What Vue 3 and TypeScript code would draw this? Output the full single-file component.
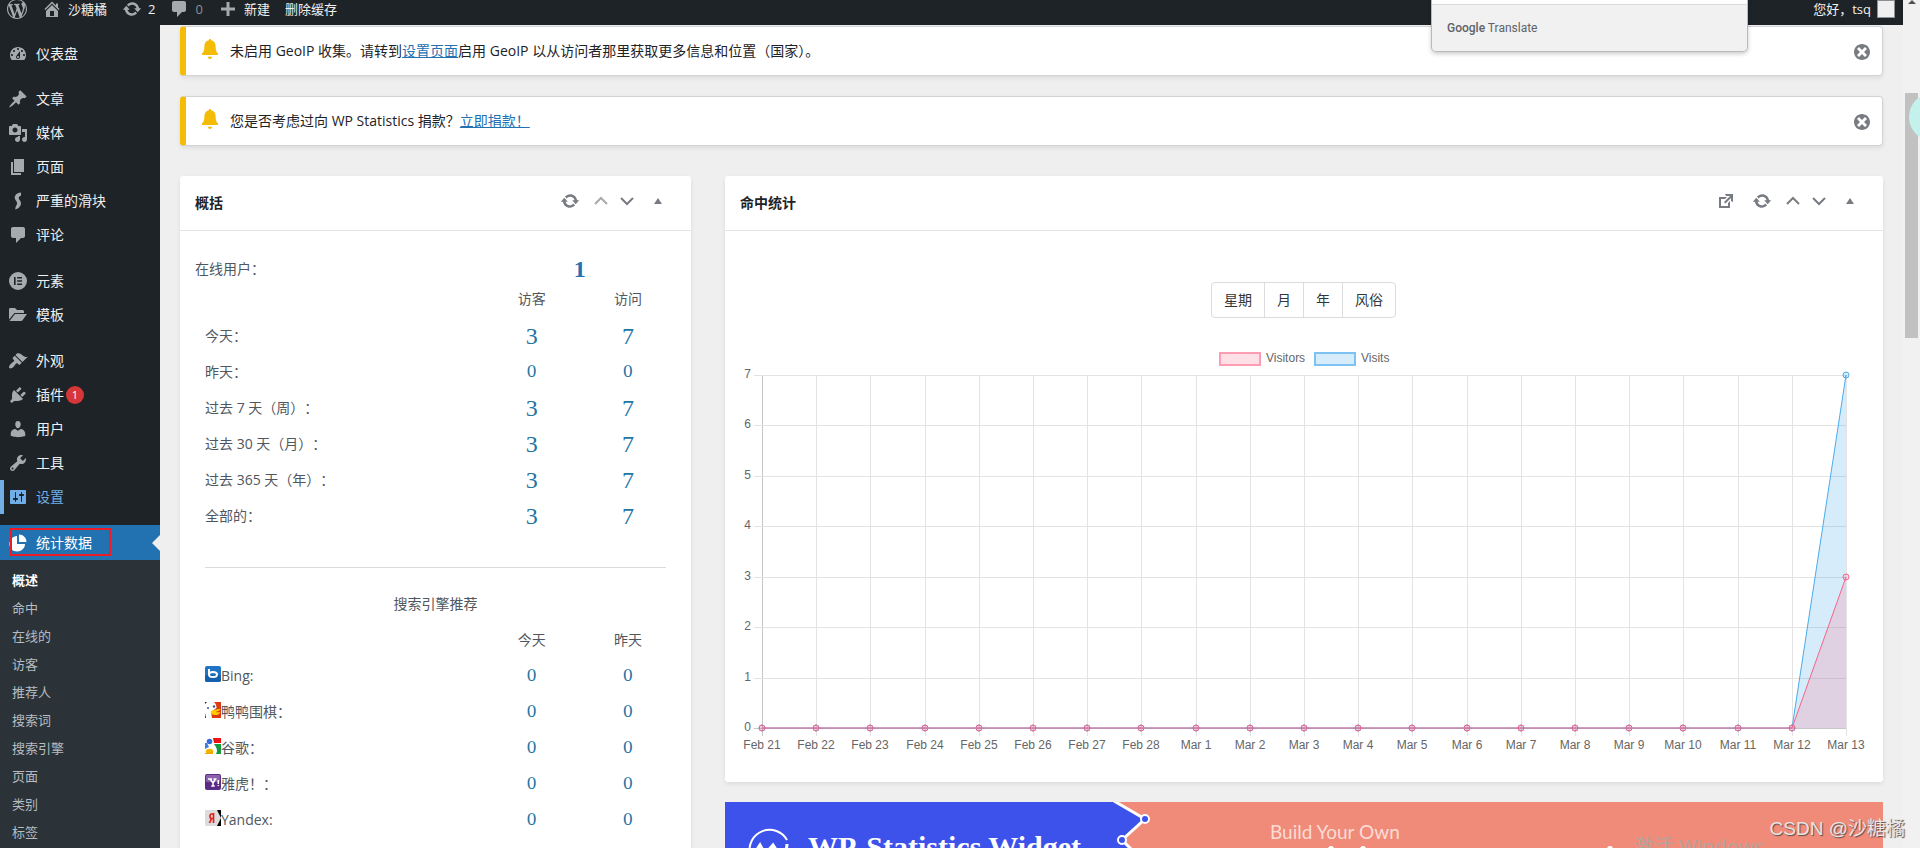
<script setup lang="ts">
interface MenuItem {
  label: string
  icon: string
  badge?: number
  highlight?: boolean
}

const icons: Record<string, string> = {
  wordpress:
    'M20 10c0-5.51-4.49-10-10-10C4.48 0 0 4.49 0 10c0 5.52 4.48 10 10 10 5.51 0 10-4.48 10-10zM7.78 15.37L4.37 6.22c.55-.02 1.17-.08 1.17-.08.5-.06.44-1.13-.06-1.11 0 0-1.45.11-2.37.11-.18 0-.37 0-.58-.01C4.12 2.69 6.87 1.11 10 1.11c2.33 0 4.45.87 6.05 2.34-.68-.11-1.65.39-1.65 1.58 0 .74.45 1.36.9 2.1.35.61.55 1.36.55 2.46 0 1.49-1.4 5-1.4 5l-3.03-8.37c.54-.02.82-.17.82-.17.5-.05.44-1.25-.06-1.22 0 0-1.44.12-2.38.12-.87 0-2.33-.12-2.33-.12-.5-.03-.56 1.2-.06 1.22l.92.08 1.26 3.41zM17.41 10c.24-.64.74-1.87.43-4.25.7 1.29 1.05 2.71 1.05 4.25 0 3.29-1.73 6.24-4.4 7.78.97-2.59 1.94-5.2 2.92-7.78zM6.1 18.09C3.12 16.65 1.11 13.53 1.11 10c0-1.3.23-2.48.72-3.59C3.25 10.3 4.67 14.2 6.1 18.09zm4.03-6.63l2.58 6.98c-.86.29-1.76.45-2.71.45-.79 0-1.57-.11-2.29-.33.81-2.38 1.62-4.74 2.42-7.1z',
  home: 'M16 8.5l1.53 1.53-1.06 1.06L10 4.6l-6.47 6.49-1.06-1.06L10 2.5l4 4v-2h2v4zm-6-2.46l6 5.99V18H4v-5.97zM12 17v-5H8v5h4z',
  update:
    'M10.2 3.28c3.53 0 6.43 2.61 6.92 6h2.08l-3.5 4-3.5-4h2.32c-.45-1.97-2.21-3.45-4.32-3.45-1.45 0-2.73.71-3.54 1.78L4.95 5.66C6.23 4.2 8.11 3.28 10.2 3.28zm-.4 13.44c-3.52 0-6.43-2.61-6.92-6H.8l3.5-4c1.17 1.33 2.33 2.67 3.5 4H5.48c.45 1.97 2.21 3.45 4.32 3.45 1.45 0 2.73-.71 3.54-1.78l1.71 1.95c-1.28 1.46-3.15 2.38-5.25 2.38z',
  comment: 'M5 2h10c1.1 0 2 .9 2 2v7c0 1.1-.9 2-2 2h-2l-5 5v-5H5c-1.1 0-2-.9-2-2V4c0-1.1.9-2 2-2z',
  plus: 'M17 8.5v3h-5.5v5.500h-3v-5.500H3v-3h5.500V3h3v5.500z',
  dashboard:
    'M3.76 16h12.48c1.1-1.37 1.76-3.11 1.76-5 0-4.42-3.58-8-8-8s-8 3.58-8 8c0 1.89.66 3.63 1.76 5zM10 4c.55 0 1 .45 1 1s-.45 1-1 1-1-.45-1-1 .45-1 1-1zM6 6c.55 0 1 .45 1 1s-.45 1-1 1-1-.45-1-1 .45-1 1-1zm8 0c.55 0 1 .45 1 1s-.45 1-1 1-1-.45-1-1 .45-1 1-1zm-5.37 5.55L12 7v6c0 1.1-.9 2-2 2s-2-.9-2-2c0-.57.24-1.08.63-1.45zM4 10c.55 0 1 .45 1 1s-.45 1-1 1-1-.45-1-1 .45-1 1-1zm12 0c.55 0 1 .45 1 1s-.45 1-1 1-1-.45-1-1 .45-1 1-1zm-5 3c0-.55-.45-1-1-1s-1 .45-1 1 .45 1 1 1 1-.45 1-1z',
  post: 'M10.44 3.02l1.82-1.82 6.36 6.35-1.83 1.82c-1.05-.68-2.48-.57-3.41.36l-.75.75c-.92.93-1.04 2.35-.35 3.41l-1.83 1.82-2.41-2.41-2.8 2.79c-.42.42-3.38 2.71-3.8 2.29s1.86-3.39 2.28-3.81l2.79-2.79L4.1 9.36l1.83-1.82c1.05.69 2.48.57 3.4-.36l.75-.75c.93-.92 1.05-2.35.36-3.41z',
  media:
    'M13 11V4c0-.55-.45-1-1-1h-1.67L9 1H5L3.67 3H2c-.55 0-1 .45-1 1v7c0 .55.45 1 1 1h10c.55 0 1-.45 1-1zM7 4.500c1.380 0 2.500 1.120 2.500 2.500S8.380 9.500 7 9.500 4.500 8.380 4.500 7 5.620 4.500 7 4.500zM14 6h5v10.500c0 1.380-1.120 2.500-2.500 2.500S14 17.880 14 16.500s1.120-2.500 2.500-2.500c.17 0 .34.02.5.05V9h-3V6zm-4 8.050V13h2v3.500c0 1.380-1.120 2.500-2.500 2.500S7 17.880 7 16.500 8.120 14 9.500 14c.17 0 .34.02.5.05z',
  page: 'M6 15V2h10v13H6zm-1 1h8v2H3V5h2v11z',
  slider: 'M13 1.500C9 1.800 6.300 4.200 6.800 7.300c.4 2.400 2.600 3.300 2.300 5.300-.2 1.700-1.700 2.600-1.900 5.900 3.900-.9 6.200-3.800 5.700-6.900-.4-2.300-2.400-3-2.200-4.800.1-1.300 1.300-1.700 2.300-2.300z',
  elementor:
    'M10 1a9 9 0 1 0 0 18a9 9 0 0 0 0-18zM6 6h1.600v8H6zM9.200 6H14v1.500H9.200zM9.200 9.250H14v1.500H9.200zM9.200 12.500H14V14H9.200z',
  folder: 'M1 4.500c0-.8.500-1.500 1.300-1.500H7l2 2h5.500c.8 0 1.500.6 1.500 1.500V8H6.500L1 14.500zM7 9h12l-4.500 6.300c-.3.400-.7.700-1.200.700H1.500z',
  appearance:
    'M14.48 11.06L7.41 3.99l1.5-1.5c.5-.56 2.3-.47 3.51.32 1.21.8 1.43 1.28 2.91 2.1 1.18.64 2.45 1.26 4.45.85zm-.71.71L6.7 4.7 4.93 6.47c-.39.39-.39 1.02 0 1.41l1.06 1.06c.39.39.39 1.03 0 1.42-.6.6-1.43 1.11-2.21 1.69-.35.26-.7.53-1.01.84C1.43 14.23.4 16.08 1.4 17.07c.99 1 2.84-.03 4.18-1.36.31-.31.58-.66.85-1.02.57-.78 1.08-1.61 1.69-2.21.39-.39 1.02-.39 1.41 0l1.06 1.06c.39.39 1.02.39 1.41 0z',
  plugins:
    'M13.11 4.36L9.87 7.6 8 5.73l3.24-3.24c.35-.34 1.05-.2 1.56.32.52.51.66 1.21.31 1.55zm-8 1.77l.91-1.12 9.01 9.01-1.19.84c-.71.71-2.63 1.16-3.82 1.16H6.14L4.9 17.26c-.59.59-1.54.59-2.12 0-.59-.58-.59-1.53 0-2.12l1.24-1.24v-3.88c0-1.13.4-3.19 1.09-3.89zm7.26 3.97l3.24-3.24c.34-.35 1.04-.21 1.55.31.52.51.66 1.21.31 1.55l-3.24 3.25z',
  users:
    'M10 9.250c-2.270 0-2.730-3.440-2.730-3.440C7 4.020 7.820 2 9.970 2c2.160 0 2.980 2.020 2.710 3.810 0 0-.41 3.440-2.680 3.440zm0 2.570L12.720 10c2.390 0 4.520 2.330 4.520 4.530v2.490s-3.650 1.130-7.240 1.130c-3.650 0-7.240-1.130-7.240-1.130v-2.490c0-2.250 1.940-4.480 4.470-4.480z',
  tools:
    'M16.68 9.77c-1.34 1.34-3.3 1.67-4.95.99l-5.41 6.52c-.99.99-2.59.99-3.58 0s-.99-2.59 0-3.57l6.52-5.42c-.68-1.65-.35-3.61.99-4.95 1.28-1.28 3.12-1.62 4.72-1.06l-2.89 2.89 2.82 2.82 2.86-2.87c.53 1.58.18 3.39-1.08 4.65zM3.81 16.21c.4.39 1.04.39 1.43 0 .4-.4.4-1.04 0-1.43-.39-.4-1.03-.4-1.43 0-.39.39-.39 1.03 0 1.43z',
  settings:
    'M18 16V4c0-.55-.45-1-1-1H3c-.55 0-1 .45-1 1v12c0 .55.45 1 1 1h14c.55 0 1-.45 1-1zM8 11h1c.55 0 1 .45 1 1s-.45 1-1 1H8v1.500c0 .28-.22.5-.5.5s-.5-.22-.5-.5V13H6c-.55 0-1-.45-1-1s.45-1 1-1h1V5.500c0-.28.22-.5.5-.5s.5.22.5.5V11zm5-2h-1c-.55 0-1-.45-1-1s.45-1 1-1h1V5.500c0-.28.22-.5.5-.5s.5.22.5.5V7h1c.55 0 1 .45 1 1s-.45 1-1 1h-1v5.500c0 .28-.22.5-.5.5s-.5-.22-.5-.5V9z',
  pie: 'M11 9V1.500c4.200 0 7.500 3.300 7.500 7.500H11zM9 3v8h8c0 4.200-3.600 7.500-8 7.500S1.500 15.200 1.500 11 4.800 3 9 3z',
  external: 'M9 3h8v8l-2-1V6.920l-5.600 5.590-1.410-1.410L14.080 5H10zm3 12v-3l2-2v7H3V6h8L9 8H5v7h7z',
  close:
    'M10 2c4.420 0 8 3.580 8 8s-3.580 8-8 8-8-3.580-8-8 3.580-8 8-8zm5 11l-3-3 3-3-2-2-3 3-3-3-2 2 3 3-3 3 2 2 3-3 3 3z',
  bell: 'M10 0c.7 0 1.100.5 1.200 1.200C14 1.800 15.600 4 15.600 7c0 4 .7 6 2.400 7.500V16H2v-1.500C3.700 13 4.400 11 4.400 7c0-3 1.600-5.200 4.400-5.800C8.900.5 9.300 0 10 0zM7.900 17.800h4.200c-.2 1.400-1 2.200-2.100 2.200s-1.900-.8-2.100-2.200z',
}

const menuGroups: MenuItem[][] = [
  [{ label: '仪表盘', icon: 'dashboard' }],
  [
    { label: '文章', icon: 'post' },
    { label: '媒体', icon: 'media' },
    { label: '页面', icon: 'page' },
    { label: '严重的滑块', icon: 'slider' },
    { label: '评论', icon: 'comment' },
  ],
  [
    { label: '元素', icon: 'elementor' },
    { label: '模板', icon: 'folder' },
  ],
  [
    { label: '外观', icon: 'appearance' },
    { label: '插件', icon: 'plugins', badge: 1 },
    { label: '用户', icon: 'users' },
    { label: '工具', icon: 'tools' },
    { label: '设置', icon: 'settings', highlight: true },
  ],
]

const submenu = ['概述', '命中', '在线的', '访客', '推荐人', '搜索词', '搜索引擎', '页面', '类别', '标签']

const periods = [
  { label: '今天：', visitors: 3, visits: 7 },
  { label: '昨天：', visitors: 0, visits: 0 },
  { label: '过去 7 天（周）：', visitors: 3, visits: 7 },
  { label: '过去 30 天（月）：', visitors: 3, visits: 7 },
  { label: '过去 365 天（年）：', visitors: 3, visits: 7 },
  { label: '全部的：', visitors: 3, visits: 7 },
]

const engines = [
  { key: 'bing', label: 'Bing:' },
  { key: 'duck', label: '鸭鸭围棋：' },
  { key: 'google', label: '谷歌：' },
  { key: 'yahoo', label: '雅虎！：' },
  { key: 'yandex', label: 'Yandex:' },
]

const ranges = ['星期', '月', '年', '风俗']

const days: string[] = [
  ...Array.from({ length: 8 }, (_, i) => `Feb ${21 + i}`),
  ...Array.from({ length: 13 }, (_, i) => `Mar ${1 + i}`),
]
const visitors = days.map((_, i) => (i === days.length - 1 ? 3 : 0))
const visits = days.map((_, i) => (i === days.length - 1 ? 7 : 0))

const plot = { left: 37, right: 1121, top: 57, bottom: 410 }
const xAt = (i: number): number => Math.round(plot.left + ((plot.right - plot.left) * i) / (days.length - 1))
const yAt = (v: number): number => Math.round(plot.bottom - ((plot.bottom - plot.top) * v) / 7)
const line = (values: number[]): string => values.map((v, i) => `${xAt(i)},${yAt(v)}`).join(' ')
const area = (values: number[]): string => `${line(values)} ${plot.right},${plot.bottom} ${plot.left},${plot.bottom}`
const ticks = [0, 1, 2, 3, 4, 5, 6, 7]
</script>

<template>
  <div class="window">
    <div class="screen">
      <header class="adminbar">
        <a class="bar-item logo" href="#" aria-label="WordPress"><svg class="ic" viewBox="0 0 20 20"><path :d="icons.wordpress" /></svg></a>
        <a class="bar-item site" href="#"><svg class="ic" viewBox="0 0 20 20"><path fill-rule="evenodd" :d="icons.home" /></svg>沙糖橘</a>
        <a class="bar-item updates" href="#"><svg class="ic" viewBox="0 0 20 20"><path :d="icons.update" /></svg>2</a>
        <a class="bar-item comments" href="#"><svg class="ic" viewBox="0 0 20 20"><path :d="icons.comment" /></svg>0</a>
        <a class="bar-item create" href="#"><svg class="ic" viewBox="0 0 20 20"><path :d="icons.plus" /></svg>新建</a>
        <a class="bar-item" href="#">删除缓存</a>
        <a class="bar-item account" href="#">您好，tsq<span class="avatar"></span></a>
      </header>

      <div class="body">
        <nav class="sidebar">
          <ul v-for="(group, g) in menuGroups" :key="g" class="group">
            <li v-for="item in group" :key="item.label">
              <a class="menu-item" :class="{ highlight: item.highlight }" href="#">
                <svg class="ic" viewBox="0 0 20 20"><path fill-rule="evenodd" :d="icons[item.icon]" /></svg>
                <span>{{ item.label }}</span>
                <span v-if="item.badge" class="badge">{{ item.badge }}</span>
              </a>
            </li>
          </ul>
          <a class="menu-item current" href="#">
            <svg class="ic" viewBox="0 0 20 20"><path :d="icons.pie" /></svg>
            <span>统计数据</span>
            <span class="marker"></span>
          </a>
          <ul class="submenu">
            <li v-for="(name, i) in submenu" :key="name"><a href="#" :class="{ active: i === 0 }">{{ name }}</a></li>
          </ul>
        </nav>

        <main class="content">
          <div class="notice">
            <svg class="bell" viewBox="0 0 20 20"><path :d="icons.bell" /></svg>
            <p>未启用 GeoIP 收集。请转到<a href="#">设置页面</a>启用 GeoIP 以从访问者那里获取更多信息和位置（国家）。</p>
            <button type="button" class="dismiss" aria-label="关闭"><svg class="ic" viewBox="0 0 20 20"><path :d="icons.close" /></svg></button>
          </div>
          <div class="notice">
            <svg class="bell" viewBox="0 0 20 20"><path :d="icons.bell" /></svg>
            <p>您是否考虑过向 WP Statistics 捐款？<a href="#">立即捐款！</a></p>
            <button type="button" class="dismiss" aria-label="关闭"><svg class="ic" viewBox="0 0 20 20"><path :d="icons.close" /></svg></button>
          </div>

          <div class="columns">
            <section class="panel">
              <div class="panel-head">
                <h2>概括</h2>
                <button type="button" class="tool" aria-label="刷新"><svg class="ic" viewBox="0 0 20 20"><path :d="icons.update" /></svg></button>
                <button type="button" class="tool slim faded" aria-label="上移"><svg class="chev" viewBox="0 0 14 14"><path d="M1 10l6-6 6 6" /></svg></button>
                <button type="button" class="tool slim" aria-label="下移"><svg class="chev" viewBox="0 0 14 14"><path d="M1 4l6 6 6-6" /></svg></button>
                <button type="button" class="tool" aria-label="折叠"><svg class="tri" viewBox="0 0 8 6"><path d="M4 0l4 6H0z" /></svg></button>
              </div>
              <table class="summary">
                <colgroup><col class="c-label" /><col class="c-num" /><col class="c-num" /></colgroup>
                <tbody>
                  <tr>
                    <th scope="row" class="online">在线用户：</th>
                    <td colspan="2" class="online-count"><a href="#">1</a></td>
                  </tr>
                  <tr class="heads"><td></td><th scope="col">访客</th><th scope="col">访问</th></tr>
                  <tr v-for="row in periods" :key="row.label">
                    <th scope="row">{{ row.label }}</th>
                    <td><a href="#" :class="{ zero: !row.visitors }">{{ row.visitors }}</a></td>
                    <td><a href="#" :class="{ zero: !row.visits }">{{ row.visits }}</a></td>
                  </tr>
                  <tr class="rule"><td colspan="3"><hr /></td></tr>
                  <tr><th colspan="3" class="caption">搜索引擎推荐</th></tr>
                  <tr><td></td><th scope="col">今天</th><th scope="col">昨天</th></tr>
                  <tr v-for="engine in engines" :key="engine.key">
                    <th scope="row">
                      <span class="engine">
                        <svg v-if="engine.key === 'bing'" viewBox="0 0 16 16">
                          <rect width="16" height="16" rx="2" fill="#1f74c4" />
                          <rect y="9" width="16" height="7" rx="2" fill="#1560ad" />
                          <path d="M4 3v6" stroke="#fff" stroke-width="2" />
                          <ellipse cx="8" cy="8.500" rx="4" ry="2.500" fill="none" stroke="#fff" stroke-width="2" />
                        </svg>
                        <svg v-else-if="engine.key === 'duck'" viewBox="0 0 16 16">
                          <rect width="16" height="16" fill="#de3a12" />
                          <path d="M0 0h9c2 2 2.500 4 2.500 6L6 10l1 6H0z" fill="#fff" />
                          <path d="M0 0h2L0 2zM0 11l1 5H0z" fill="#222" />
                          <circle cx="3" cy="6" r="1" fill="#2a5f8f" /><circle cx="9" cy="4.500" r="1.200" fill="#2a5f8f" />
                          <path d="M6 9c3-1 6-2 9.500-2-1 2-3 2.500-5 3 2 .5 4 .3 5-.3-1 3-4 3.800-7 3.100C6 12.300 5 10.500 6 9z" fill="#fc0" />
                        </svg>
                        <svg v-else-if="engine.key === 'google'" viewBox="0 0 16 16">
                          <rect width="16" height="16" fill="#fff" />
                          <path d="M8 0h8v5H9z" fill="#e11" /><path d="M9 6h7v10h-5c2-3 1-6-2-10z" fill="#159a3e" />
                          <path d="M0 5h2l2 4-4 2z" fill="#3a7ee0" /><circle cx="4.500" cy="3.500" r="2.800" fill="#2f6fd6" />
                          <ellipse cx="4.500" cy="13.300" rx="3.800" ry="2.500" fill="#f6b400" /><path d="M0 15l8-1v2H0z" fill="#e8a800" />
                        </svg>
                        <svg v-else-if="engine.key === 'yahoo'" viewBox="0 0 16 16">
                          <rect width="16" height="16" rx="2" fill="#5c2d86" /><rect x="1" y="1" width="14" height="7" rx="1" fill="#8c62ad" />
                          <path d="M3 5h4M8.500 5h3M5 5l3 4 2.500-4M8 9v3M6.300 12h3.400M13.300 6v4M13.300 11v1" fill="none" stroke="#fff" stroke-width="1.500" />
                        </svg>
                        <svg v-else viewBox="0 0 16 16">
                          <path d="M8 0h8v16H8z" fill="#000" /><path d="M1 0h11l4 8-4 8H1a1 1 0 0 1-1-1V1a1 1 0 0 1 1-1z" fill="#dcdcdc" />
                          <path d="M8.500 3v10M8.500 4H6.500C4.500 4 4.500 8.500 6.500 8.500h2M6.500 8.500L4.500 13" fill="none" stroke="#e3211c" stroke-width="1.700" />
                        </svg>
                        {{ engine.label }}
                      </span>
                    </th>
                    <td><a href="#" class="zero">0</a></td>
                    <td><a href="#" class="zero">0</a></td>
                  </tr>
                </tbody>
              </table>
            </section>

            <div class="wide">
              <section class="panel">
                <div class="panel-head">
                  <h2>命中统计</h2>
                  <button type="button" class="tool" aria-label="打开"><svg class="ic" viewBox="0 0 20 20"><path :d="icons.external" /></svg></button>
                  <button type="button" class="tool" aria-label="刷新"><svg class="ic" viewBox="0 0 20 20"><path :d="icons.update" /></svg></button>
                  <button type="button" class="tool slim" aria-label="上移"><svg class="chev" viewBox="0 0 14 14"><path d="M1 10l6-6 6 6" /></svg></button>
                  <button type="button" class="tool slim" aria-label="下移"><svg class="chev" viewBox="0 0 14 14"><path d="M1 4l6 6 6-6" /></svg></button>
                  <button type="button" class="tool" aria-label="折叠"><svg class="tri" viewBox="0 0 8 6"><path d="M4 0l4 6H0z" /></svg></button>
                </div>
                <div class="ranges">
                  <button v-for="r in ranges" :key="r" type="button">{{ r }}</button>
                </div>
                <svg class="chart" viewBox="0 0 1158 464" role="img" aria-label="Visitors, Visits">
                  <g class="legend">
                    <rect x="495" y="35" width="40" height="12" class="key-visitors" />
                    <text x="541" y="44">Visitors</text>
                    <rect x="590" y="35" width="40" height="12" class="key-visits" />
                    <text x="636" y="44">Visits</text>
                  </g>
                  <g class="grid">
                    <line v-for="(d, i) in days" :key="d" :x1="xAt(i)" :x2="xAt(i)" :y1="plot.top" :y2="plot.bottom + 8" :class="{ axis: i === 0 }" />
                    <line v-for="t in ticks" :key="t" :x1="plot.left - 8" :x2="plot.right" :y1="yAt(t)" :y2="yAt(t)" :class="{ axis: t === 0 }" />
                  </g>
                  <g class="labels">
                    <text v-for="t in ticks" :key="t" :x="plot.left - 11" :y="yAt(t) + 3" text-anchor="end">{{ t }}</text>
                    <text v-for="(d, i) in days" :key="d" :x="xAt(i)" :y="plot.bottom + 21" text-anchor="middle">{{ d }}</text>
                  </g>
                  <g class="visits">
                    <polygon :points="area(visits)" />
                    <polyline :points="line(visits)" />
                    <circle v-for="(v, i) in visits" :key="i" :cx="xAt(i)" :cy="yAt(v)" r="3" />
                  </g>
                  <g class="visitors">
                    <polygon :points="area(visitors)" />
                    <polyline :points="line(visitors)" />
                    <circle v-for="(v, i) in visitors" :key="i" :cx="xAt(i)" :cy="yAt(v)" r="3" />
                  </g>
                </svg>
              </section>

              <a class="banner" href="#">
                <svg viewBox="0 0 1158 160" role="img" aria-label="WP-Statistics Widget">
                  <rect width="1158" height="160" fill="#f08b79" />
                  <path d="M0 0h391l29 17-23 21 30 30v92H0z" fill="#3d52ea" />
                  <path d="M389-1l31 18-23 21 30 30" fill="none" stroke="#fff" stroke-width="3" />
                  <circle cx="420" cy="17" r="4" fill="#3d52ea" stroke="#fff" stroke-width="2" />
                  <circle cx="397" cy="38" r="4" fill="#3d52ea" stroke="#fff" stroke-width="2" />
                  <path d="M25 52A20 20 0 0 1 62 38" fill="none" stroke="#fff" stroke-width="2" />
                  <path d="M62 42A20 20 0 0 1 25 52M29 52l6-9 5 9 8-9 6 9" fill="none" stroke="#fff" stroke-width="3" />
                  <text x="83" y="55" class="banner-title">WP-Statistics Widget</text>
                  <text x="545" y="37" class="banner-sub">Build Your Own</text>
                  <g fill="#fff"><circle cx="606" cy="47" r="3" /><circle cx="638" cy="47" r="3" /><circle cx="885" cy="47" r="3" /></g>
                </svg>
              </a>
            </div>
          </div>
        </main>
      </div>
    </div>

    <div class="scrollbar"><span class="arrow"></span><span class="thumb"></span></div>
    <div class="bubble"></div>
    <div class="translate"><p><b>Google</b> Translate</p></div>
    <div class="frame"></div>
    <div class="activate">激活 Windows</div>
    <div class="watermark">CSDN @沙糖橘</div>
  </div>
</template>

<style>
html,
body {
  margin: 0;
  overflow: hidden;
}
</style>

<style scoped>
.window {
  position: relative;
  display: flex;
  height: 100vh;
  overflow: hidden;
  background: #efefef;
  color: #1d2327;
  font: 14px/20px "Open Sans", "Noto Sans CJK SC", sans-serif;
}
.window * {
  box-sizing: border-box;
}
ul,
p,
h2 {
  margin: 0;
  padding: 0;
  list-style: none;
}
a {
  color: #2271b1;
}
button {
  padding: 0;
  border: 0;
  background: none;
  font: inherit;
}
.ic {
  display: block;
  flex: none;
  width: 20px;
  height: 20px;
  fill: currentColor;
}
.screen {
  flex: 1;
  min-width: 0;
  display: flex;
  flex-direction: column;
}

.adminbar {
  flex: none;
  display: flex;
  align-items: center;
  height: 25px;
  padding: 0 8px 7px 7px;
  background: #1d2327;
  font-size: 13px;
}
.bar-item {
  display: flex;
  align-items: center;
  gap: 6px;
  margin-right: 15px;
  color: #f0f0f1;
  text-decoration: none;
}
.bar-item .ic {
  color: #a7aaad;
}
.updates {
  margin-right: 14px;
}
.comments {
  color: #8c8f94;
}
.account {
  margin: 0 0 0 auto;
}
.avatar {
  width: 18px;
  height: 18px;
  border: 1px solid #8c8f94;
  background: #efefef;
}

.body {
  flex: 1;
  min-height: 0;
  display: flex;
}
.sidebar {
  flex: none;
  width: 160px;
  padding-top: 12px;
  background: #1d2327;
}
.group {
  margin-bottom: 11px;
}
.group:nth-of-type(2),
.group:nth-of-type(3) {
  margin-bottom: 12px;
}
.menu-item {
  display: flex;
  align-items: center;
  height: 34px;
  padding-left: 8px;
  color: #f0f0f1;
  text-decoration: none;
}
.menu-item .ic {
  margin-right: 8px;
  color: #a7aaad;
}
.menu-item.highlight,
.menu-item.highlight .ic {
  color: #72aee6;
}
.menu-item.highlight {
  box-shadow: inset 4px 0 0 #72aee6;
}
.badge {
  width: 18px;
  height: 18px;
  margin-left: 2px;
  border-radius: 9px;
  background: #d63638;
  color: #fff;
  font-size: 11px;
  line-height: 18px;
  text-align: center;
}
.menu-item.current {
  height: 35px;
  background: #2271b1;
  color: #fff;
}
.menu-item.current .ic {
  color: #fff;
}
.marker {
  margin-left: auto;
  border: 8px solid transparent;
  border-left: 0;
  border-right-color: #efefef;
}
.frame {
  position: absolute;
  left: 10px;
  top: 528px;
  width: 101px;
  height: 28px;
  border: 2px solid #ed1c24;
  box-sizing: border-box;
}
.submenu {
  height: 100%;
  padding: 6px 0;
  background: #2c3338;
}
.submenu a {
  display: block;
  padding: 4px 12px;
  color: #b5bcc2;
  font-size: 13px;
  text-decoration: none;
}
.submenu .active {
  color: #fff;
  font-weight: 700;
}

.content {
  flex: 1;
  min-width: 0;
  padding: 1px 20px 0;
}
.notice {
  display: flex;
  align-items: center;
  height: 50px;
  margin-bottom: 20px;
  padding: 0 10px 0 14px;
  border: 1px solid #d2d3d6;
  border-left: 6px solid #f4bb07;
  border-radius: 4px;
  background: #fff;
  box-shadow: 0 2px 4px rgba(0, 0, 0, 0.08);
}
.bell {
  width: 20px;
  height: 20px;
  margin: 0 10px 4px 0;
  fill: #f4bb07;
}
.dismiss {
  margin-left: auto;
  padding-top: 2px;
  color: #787c82;
}

.columns {
  display: grid;
  grid-template-columns: 511fr 1158fr;
  gap: 34px;
  padding-top: 10px;
}
.panel {
  border-radius: 3px;
  background: #fff;
  box-shadow: 0 2px 4px rgba(0, 0, 0, 0.08);
}
.panel-head {
  display: flex;
  align-items: center;
  height: 55px;
  padding: 0 15px;
  border-bottom: 1px solid #e2e4e7;
}
h2 {
  flex: 1;
  font-size: 14px;
  font-weight: 600;
}
.tool {
  display: flex;
  justify-content: center;
  align-items: center;
  width: 36px;
  height: 50px;
  padding-bottom: 4px;
  color: #787c82;
}
.tool.slim {
  width: 26px;
}
.tool.faded {
  color: #a7aaad;
}
.chev {
  width: 14px;
  height: 14px;
  fill: none;
  stroke: currentColor;
  stroke-width: 2;
}
.tri {
  width: 8px;
  height: 6px;
  fill: currentColor;
}

.summary {
  width: calc(100% - 30px);
  margin: 20px 15px 0;
  border-collapse: collapse;
  table-layout: fixed;
  color: #50575e;
  text-spacing-trim: space-all;
}
.c-label {
  width: 60%;
}
.c-num {
  width: 20%;
}
.summary tr {
  height: 36px;
}
.summary .heads {
  height: 31px;
}
.summary .heads th {
  padding-bottom: 7px;
}
.summary .rule {
  height: 52px;
}
.summary th,
.summary td {
  padding: 0;
  font-weight: 400;
  text-align: center;
}
.summary th[scope="row"] {
  padding-left: 10px;
  text-align: left;
}
.summary th.online {
  padding-left: 0;
}
.summary td a {
  display: block;
  color: #1f75a3;
  font: 24px/30px "Liberation Serif", serif;
  text-decoration: none;
}
.summary td a.zero {
  font: 16px/30px "DejaVu Serif", serif;
}
.summary td.online-count a {
  color: #2271b1;
  font-weight: 700;
  line-height: 28px;
}
hr {
  height: 1px;
  margin: 14px 10px 0;
  border: 0;
  background: #dcdcde;
}
.engine {
  display: flex;
  align-items: center;
}
.engine svg {
  width: 16px;
  height: 16px;
  margin-bottom: 4px;
}

.wide {
  display: flex;
  flex-direction: column;
  gap: 20px;
}
.ranges {
  display: flex;
  justify-content: center;
  padding-top: 51px;
}
.ranges button {
  height: 36px;
  margin-left: -1px;
  padding: 0 12px;
  border: 1px solid #dcdcde;
  color: #32373c;
}
.ranges button:first-child {
  border-radius: 4px 0 0 4px;
}
.ranges button:last-child {
  border-radius: 0 4px 4px 0;
}
.chart {
  display: block;
  width: 100%;
  font: 12px "Liberation Sans", Arial, sans-serif;
  fill: #666;
}
.grid line {
  stroke: #e3e3e3;
  shape-rendering: crispEdges;
}
.grid line.axis {
  stroke: #c6c6c6;
}
.key-visitors {
  fill: #ffe0e6;
  stroke: #ff9db2;
  stroke-width: 2;
}
.key-visits {
  fill: #d7ecfb;
  stroke: #7cc2f2;
  stroke-width: 2;
}
.visits polygon,
.visits circle {
  fill: rgba(54, 162, 235, 0.2);
}
.visitors polygon,
.visitors circle {
  fill: rgba(255, 99, 132, 0.2);
}
.visits polyline,
.visits circle {
  stroke: #4aabed;
}
.visitors polyline,
.visitors circle {
  stroke: #f5668a;
}
.chart polyline {
  fill: none;
}
.banner svg {
  display: block;
  width: 100%;
}
.banner-title {
  fill: #fff;
  font: 700 30px "Liberation Serif", serif;
}
.banner-sub {
  fill: #fbdcd5;
  font: 19px Lato, sans-serif;
}

.scrollbar {
  flex: none;
  display: flex;
  flex-direction: column;
  align-items: center;
  width: 17px;
  background: #f1f1f1;
}
.arrow {
  border: 4px solid transparent;
  border-top: 0;
  border-bottom-color: #505050;
}
.thumb {
  width: 13px;
  height: 245px;
  margin-top: 89px;
  background: #c1c1c1;
}
.bubble {
  position: absolute;
  top: 93px;
  right: -37px;
  width: 48px;
  height: 48px;
  border-radius: 50%;
  background: #c5f1ec;
}
.translate {
  position: absolute;
  top: 0;
  right: 172px;
  width: 317px;
  height: 52px;
  padding-top: 5px;
  border: 1px solid #b9b9b9;
  border-top: 0;
  border-radius: 0 0 5px 5px;
  background: linear-gradient(#fff 4px, #dadce0 4px, #dadce0 5px, #f1f1f1 5px);
  box-shadow: 0 2px 4px rgba(0, 0, 0, 0.2);
}
.translate p {
  padding: 13px 15px;
  color: #5f6368;
  font: 12px/20px Roboto, sans-serif;
}
.translate b {
  font-weight: 500;
}
.activate {
  position: absolute;
  top: 833px;
  right: 156px;
  color: #b5a39c;
  font-size: 20px;
  line-height: 28px;
}
.watermark {
  position: absolute;
  right: 15px;
  bottom: 5px;
  color: #e9e4e3;
  font: 19px/28px "Liberation Sans", "Noto Sans CJK SC", sans-serif;
  text-shadow: 1px 1px 1px #5a4c49;
}
</style>
